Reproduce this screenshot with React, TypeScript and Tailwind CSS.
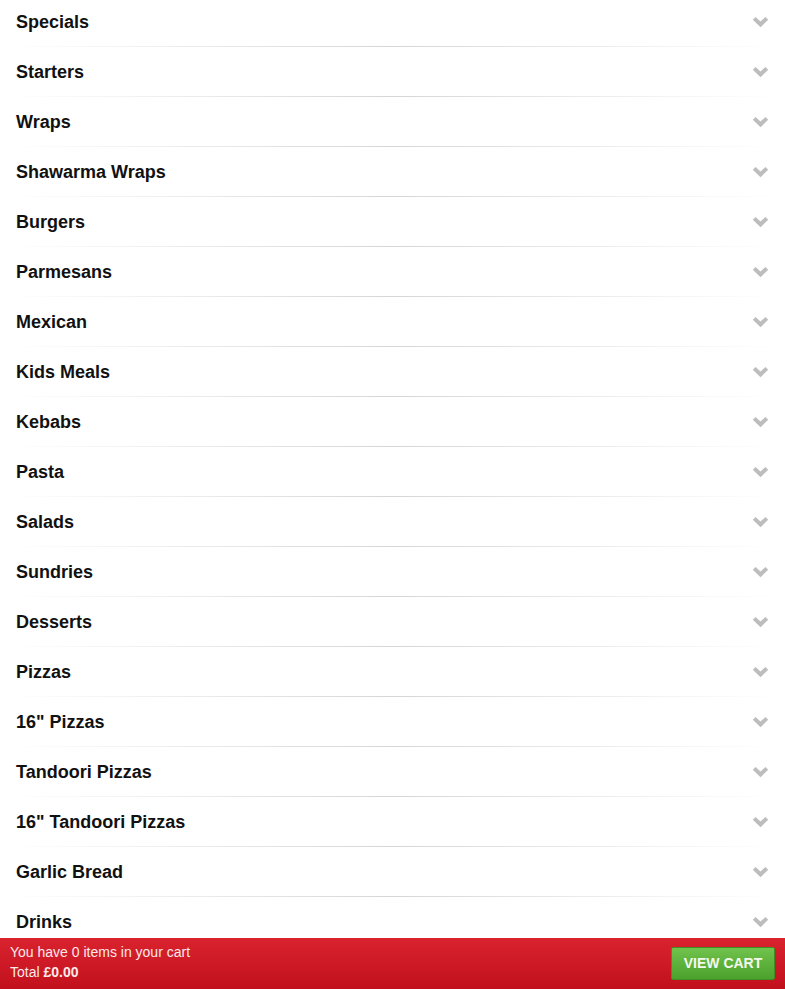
import React from 'react';

const categories = [
  'Specials',
  'Starters',
  'Wraps',
  'Shawarma Wraps',
  'Burgers',
  'Parmesans',
  'Mexican',
  'Kids Meals',
  'Kebabs',
  'Pasta',
  'Salads',
  'Sundries',
  'Desserts',
  'Pizzas',
  '16" Pizzas',
  'Tandoori Pizzas',
  '16" Tandoori Pizzas',
  'Garlic Bread',
  'Drinks',
];

const Chevron = () => (
  <svg width="17" height="12" viewBox="0 0 17 12" className="text-[#bdbdbd]">
    <path d="M0.8 3.8 L3.6 1 L8.5 5.6 L13.4 1 L16.2 3.8 L8.5 11.3 Z" fill="currentColor" />
  </svg>
);

const CategoryRow: React.FC<{ name: string }> = ({ name }) => (
  <div>
    <div className="flex h-[44px] items-center justify-between pl-4 pr-[16px]">
      <span className="text-[18px] font-bold text-[#111]">{name}</span>
      <Chevron />
    </div>
    <div className="mx-2 mt-[2px] mb-[3px] h-px bg-gradient-to-r from-transparent via-[#d6d6d6] to-transparent" />
  </div>
);

export default function App() {
  return (
    <div className="min-h-screen bg-white pb-[60px]" style={{ fontFamily: '"Liberation Sans", Arial, sans-serif' }}>
      {categories.map((c) => (
        <CategoryRow key={c} name={c} />
      ))}

      <div className="fixed bottom-0 left-0 right-0 flex h-[51px] items-center justify-between bg-gradient-to-b from-[#d9232f] to-[#c20f1d] pl-[10px] pr-[10px]">
        <div className="pb-[4px] text-[14px] leading-[20px] text-[#fbe9e9]">
          <div>You have 0 items in your cart</div>
          <div>
            Total <span className="font-bold">£0.00</span>
          </div>
        </div>
        <button className="flex h-[33px] w-[104px] items-center justify-center rounded-[2px] border border-[#3f8f24] bg-gradient-to-b from-[#70c34c] to-[#4aa12b] text-[14px] font-bold text-[#f4f9ee]">
          VIEW CART
        </button>
      </div>
    </div>
  );
}
